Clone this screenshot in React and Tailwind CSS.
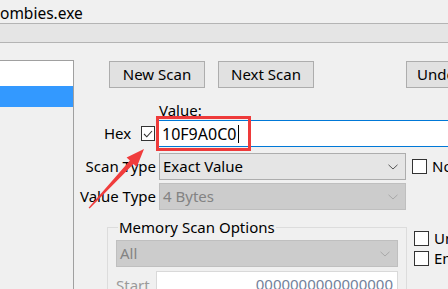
import React from "react";

function Chevron({ color }) {
  return (
    <svg width="10" height="6" viewBox="0 0 10 6" className="shrink-0">
      <path d="M0.5 0.8l4.5 4.2 4.5-4.2" stroke={color} fill="none" strokeWidth="1" />
    </svg>
  );
}

function Select({ value, disabled, className }) {
  return (
    <div
      className={
        "flex items-center justify-between h-[27px] pl-[3px] pr-[7px] border " +
        (disabled ? "bg-[#cccccc] border-[#bfbfbf] text-[#838383] " : "bg-[#e5e5e5] border-[#adadad] text-black ") +
        className
      }
    >
      <span>{value}</span>
      <Chevron color={disabled ? "#a8a8a8" : "#555555"} />
    </div>
  );
}

function Box({ label }) {
  return (
    <div className="flex items-center gap-[5px] h-[15px] shrink-0">
      <div className="w-[15px] h-[15px] border border-[#333333] bg-white shrink-0" />
      <span className="whitespace-nowrap leading-[15px]">{label}</span>
    </div>
  );
}

export default function App() {
  return (
    <div className="relative w-[448px] h-[289px] overflow-hidden bg-[#f0f0f0] text-black text-[15px] font-['Noto_Sans',sans-serif]">
      <div className="h-[24px] border-b border-[#b4b4b4] pt-[3px] leading-[20px] text-[15.5px] whitespace-nowrap">
        ombies.exe
      </div>
      <div className="h-[19px] bg-[#e5e5e5] border-b border-[#b4b4b4]" />

      <div className="flex h-[246px]">
        {/* process list */}
        <div className="w-[74px] shrink-0 mt-[17px] border-t border-r border-[#a0a0a0]">
          <div className="h-[25px] bg-white" />
          <div className="h-[21px] bg-[#3399ff]" />
        </div>

        <div className="flex-1 min-w-0 flex flex-col">
          {/* buttons */}
          <div className="flex mt-[18px] pl-[35px] h-[27px] whitespace-nowrap">
            <button className="w-[96px] h-[27px] shrink-0 bg-[#e1e1e1] border border-[#adadad]">New Scan</button>
            <button className="w-[96px] h-[27px] shrink-0 ml-[13px] bg-[#e1e1e1] border border-[#adadad]">Next Scan</button>
            <button className="w-[96px] h-[27px] shrink-0 ml-[92px] bg-[#e1e1e1] border border-[#adadad] text-left pl-[10px]">Undo Scan</button>
          </div>

          <div className="h-[33px] pt-[12px] leading-[20px] pl-[85px]">Value:</div>

          {/* hex + value input */}
          <div className="flex items-center h-[27px]">
            <span className="ml-[30px] w-[28px] shrink-0">Hex</span>
            <div className="ml-[9px] w-[14px] h-[15px] border border-[#333333] bg-white flex items-center justify-center shrink-0">
              <svg width="10" height="8" viewBox="0 0 10 8">
                <path d="M1 4l2.8 2.8L9 1" stroke="#333333" fill="none" strokeWidth="1.1" />
              </svg>
            </div>
            <div className="ml-[4px] flex-1 h-[27px] bg-white border-y border-[#0078d7] flex items-center pl-[3px] text-[16px]">
              10F9A0C0
              <span className="w-[1px] h-[18px] bg-black ml-[2px]" />
            </div>
          </div>

          {/* scan type */}
          <div className="flex items-center mt-[6px] h-[27px]">
            <span className="w-[82px] shrink-0 text-right whitespace-nowrap">Scan Type</span>
            <Select value="Exact Value" className="ml-[3px] w-[247px] shrink-0" />
            <div className="ml-[6px] shrink-0">
              <Box label="Not" />
            </div>
          </div>

          {/* value type */}
          <div className="flex items-center mt-[3px] h-[27px]">
            <span className="w-[82px] shrink-0 text-right whitespace-nowrap">Value Type</span>
            <Select value="4 Bytes" disabled className="ml-[3px] w-[247px] shrink-0" />
          </div>

          {/* memory scan options */}
          <div className="flex mt-[8px]">
            <fieldset className="ml-[33px] w-[298px] shrink-0 border border-[#dcdcdc] px-[8px] pb-[8px]">
              <legend className="ml-[2px] px-[1px] leading-[18px] whitespace-nowrap">Memory Scan Options</legend>
              <Select value="All" disabled className="mt-[4px] w-[282px]" />
              <div className="flex items-start mt-[4px]">
                <span className="w-[40px] shrink-0 text-[#9a9a9a] leading-[22px] pt-[3px]">Start</span>
                <div className="w-[242px] shrink-0 h-[27px] bg-white border border-[#d9d9d9] text-right pr-[4px] leading-[25px] text-[#71819a]">
                  0000000000000000
                </div>
              </div>
            </fieldset>
            <div className="ml-[7px] flex flex-col gap-[5px] pt-[13px] shrink-0">
              <Box label="Unrandomizer" />
              <Box label="Enable Speedhack" />
            </div>
          </div>
        </div>
      </div>

      {/* annotation: red box + arrow */}
      <div className="absolute left-[156px] top-[116px] w-[95px] h-[35px] border-[3px] border-[#ee3a3a]" />
      <svg className="absolute left-0 top-0" width="448" height="289" viewBox="0 0 448 289">
        <polygon
          points="88.6,207.7 129.9,160.5 126.6,157.4 144,149 136.8,167 133.5,163.9 89.6,208.5"
          fill="#f03c3c"
        />
      </svg>
    </div>
  );
}
